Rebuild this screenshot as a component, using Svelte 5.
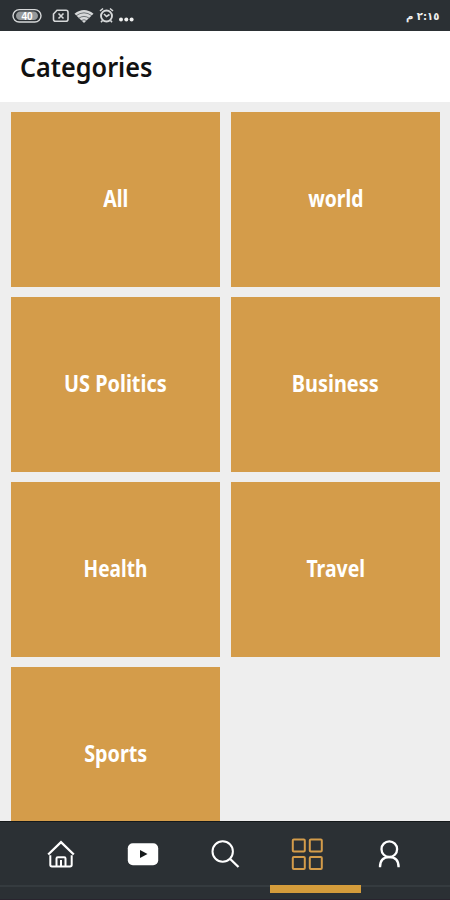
<script lang="ts">
  interface Category {
    name: string;
    stretch: number;
  }

  // Horizontal stretch condenses each bold label
  const categories: Category[] = [
    { name: 'All', stretch: 0.85 },
    { name: 'world', stretch: 0.84 },
    { name: 'US Politics', stretch: 0.865 },
    { name: 'Business', stretch: 0.865 },
    { name: 'Health', stretch: 0.83 },
    { name: 'Travel', stretch: 0.845 },
    { name: 'Sports', stretch: 0.86 },
  ];

  const tabs = ['home', 'videos', 'search', 'categories', 'profile'];
  let active = $state('categories');
</script>

<div class="screen">
  <div class="status-bar">
    <svg class="status-icons" width="124" height="20" viewBox="0 0 124 20" fill="none" stroke="#d6d8d9">
      <rect x="1" y="3.6" width="28" height="12.4" rx="6.2" stroke-width="1.4" />
      <rect x="4" y="5.5" width="22" height="8.6" rx="4.3" fill="#95999b" stroke="none" />
      <text x="15" y="13.6" text-anchor="middle" fill="#fff" stroke="none">40</text>
      <path d="M45 4.3h9q2 0 2 2v7q0 2-2 2H43.5q-2 0-2-2V8z" stroke-width="1.6" />
      <path d="m46.5 7.500 5 5m0-5-5 5" stroke-width="1.6" />
      <path d="M62.500 7.800q9.500-7.500 19 0L72 17z" fill="#d6d8d9" stroke="none" />
      <path d="M64 9.800q8-6 16 0M66.500 12.400q5.500-4 11 0M69 14.700q3-2 6 0" stroke="#555b5e" stroke-width=".8" />
      <circle cx="94.500" cy="10" r="5.500" stroke-width="1.900" />
      <path d="m88 5 3-2.500m10 2.500-3-2.500M92 8l2.500 2.500 3-2M90.500 14.500 89 16.200m9.500-1.700 1.500 1.700" stroke-width="1.600" />
      <g fill="#eee" stroke="none">
        <circle cx="109" cy="13.500" r="2" />
        <circle cx="114.300" cy="13.500" r="2" />
        <circle cx="119.600" cy="13.500" r="2" />
      </g>
    </svg>
    <span class="time" dir="rtl">٢:١٥ م</span>
  </div>

  <header>
    <h1>Categories</h1>
  </header>

  <main>
    {#each categories as category}
      <div class="card">
        <span style="transform: scaleX({category.stretch})">{category.name}</span>
      </div>
    {/each}
  </main>

  <nav>
    {#each tabs as tab}
      <button class:active={active === tab} aria-label={tab} onclick={() => (active = tab)}>
        <svg width="34" height="34" viewBox="0 0 34 34" fill="none" stroke="currentColor" stroke-width="2">
          {#if tab === 'home'}
            <path d="M4.200 17.500 17 5.200l12.800 12.300" stroke-width="2.300" />
            <path d="M6.300 18.200v9.600q0 1.700 1.700 1.700h18q1.700 0 1.700-1.700v-9.600" />
            <path d="M12.500 29v-7.500q0-1.300 1.300-1.300h6.400q1.300 0 1.300 1.300V29M17 23v6.500" />
          {:else if tab === 'videos'}
            <rect x="1.800" y="6.200" width="30.400" height="22" rx="5" fill="currentColor" stroke="none" />
            <path d="m14 13 7.500 4-7.500 4z" fill="#15191b" stroke="none" />
          {:else if tab === 'search'}
            <circle cx="14.700" cy="14.500" r="10.200" />
            <path d="m22.200 22 8.300 8" stroke-width="2.300" />
          {:else if tab === 'categories'}
            <rect x="2.800" y="2.600" width="12" height="12" rx="1" />
            <rect x="19.800" y="2.600" width="12" height="12" rx="1" />
            <rect x="2.800" y="20" width="12" height="12" rx="1" />
            <rect x="19.800" y="20" width="12" height="12" rx="1" />
          {:else}
            <circle cx="17.300" cy="12.200" r="7.800" stroke-width="2.300" />
            <path d="M8 30.200q0-10 9.300-10t9.300 10" stroke-width="2.300" />
          {/if}
        </svg>
        {#if active === tab}
          <span class="indicator"></span>
        {/if}
      </button>
    {/each}
  </nav>
</div>

<style>
  :global(body) {
    margin: 0;
  }

  .screen {
    display: flex;
    flex-direction: column;
    width: 450px;
    height: 900px;
    overflow: hidden;
    background: #eee;
    font-family: 'Noto Sans', 'Open Sans', sans-serif;
  }

  .status-bar {
    display: flex;
    flex: none;
    align-items: center;
    box-sizing: border-box;
    height: 31px;
    padding: 0 11px 0 12px;
    background: #2b3034;
  }

  .status-icons {
    margin-top: 1px;
  }

  .status-icons text {
    font: bold 10px 'Liberation Sans', sans-serif;
  }

  .time {
    margin-top: 2px;
    margin-left: auto;
    color: #eee;
    font: bold 11px 'DejaVu Sans', sans-serif;
    transform: scaleX(0.92);
    transform-origin: right;
  }

  header {
    display: flex;
    flex: none;
    align-items: center;
    box-sizing: border-box;
    height: 71px;
    padding: 1px 20px 0;
    background: #fff;
  }

  h1 {
    margin: 0;
    color: #111;
    font-size: 27.5px;
    font-weight: 600;
    line-height: 40px;
    transform: scaleX(0.917);
    transform-origin: left;
  }

  main {
    display: grid;
    flex: 1;
    grid-template-columns: 1fr 1fr;
    grid-auto-rows: 174.5px;
    gap: 10.5px;
    min-height: 0;
    padding: 10px 10px 0 11px;
    overflow: hidden;
  }

  .card {
    display: flex;
    align-items: center;
    justify-content: center;
    box-sizing: border-box;
    padding-bottom: 2px;
    background: #d49c4a;
    color: #fff;
    font-size: 23px;
    font-weight: 700;
    line-height: 30px;
  }

  nav {
    display: grid;
    flex: none;
    grid-template-columns: repeat(5, 82px);
    justify-content: center;
    box-sizing: border-box;
    height: 79px;
    border-top: 1px solid #15191b;
    background: linear-gradient(#2b3034 63px, #353b3f 63px, #353b3f 65px, #2b3034 65px, #2b3034 77px, #29242e 77px);
  }

  button {
    position: relative;
    display: flex;
    justify-content: center;
    padding: 15px 0 0;
    border: 0;
    background: none;
    color: #fff;
  }

  button.active {
    color: #d49c4a;
  }

  .indicator {
    position: absolute;
    top: 63px;
    left: 4px;
    width: 91px;
    height: 8px;
    background: #d49c3b;
  }
</style>
